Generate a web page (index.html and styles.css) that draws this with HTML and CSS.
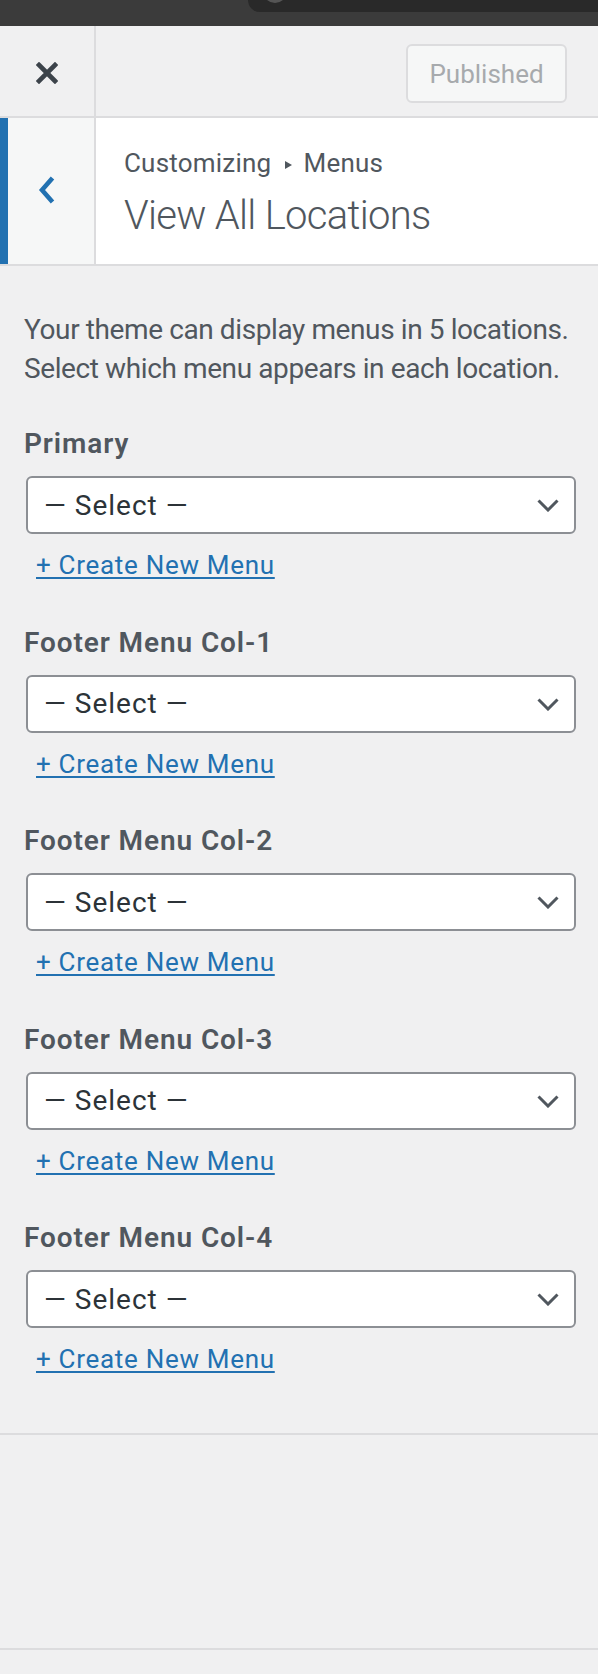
FILE: index.html
```html
<!DOCTYPE html>
<html lang="en">
<head>
<meta charset="utf-8">
<title>Customizing Menus</title>
<link rel="stylesheet" href="styles.css">
</head>
<body>
<div class="topbar"><div class="topbar-gap"></div><div class="topbar-tab"><div class="tab-dot"></div></div></div>
<header class="header">
  <button class="close" aria-label="Close">
    <svg width="22" height="22" viewBox="0 0 22 22" aria-hidden="true"><path d="M3 3 L19 19 M19 3 L3 19" stroke="#3c434a" stroke-width="4.6" stroke-linecap="square" fill="none"/></svg>
  </button>
  <div class="actions"><button class="publish" disabled>Published</button></div>
</header>
<div class="section-title">
  <div class="back" aria-label="Back">
    <svg width="18" height="30" viewBox="0 0 18 30" aria-hidden="true"><path d="M14.5 3 L4 15 L14.5 27" stroke="#2271b1" stroke-width="4.6" fill="none"/></svg>
  </div>
  <div class="title-text">
    <div class="crumb">Customizing <svg class="sep" width="7" height="8" viewBox="0 0 7 8" aria-hidden="true"><path d="M0 0 L7 4 L0 8 Z" fill="#50575e"/></svg> Menus</div>
    <h3 class="title">View All Locations</h3>
  </div>
</div>
<main class="content">
  <p class="desc">Your theme can display menus in 5 locations.<br>Select which menu appears in each location.</p>
  <ul class="controls">
    <li class="control">
      <label class="label">Primary</label>
      <div class="select-wrap"><select class="select"><option>— Select —</option></select><svg class="chev" width="22" height="13" viewBox="0 0 22 13" aria-hidden="true"><path d="M1.5 1.5 L11 11 L20.5 1.5" stroke="#50575e" stroke-width="3" fill="none"/></svg></div>
      <a class="create" href="#">+ Create New Menu</a>
    </li>
    <li class="control">
      <label class="label">Footer Menu Col-1</label>
      <div class="select-wrap"><select class="select"><option>— Select —</option></select><svg class="chev" width="22" height="13" viewBox="0 0 22 13" aria-hidden="true"><path d="M1.5 1.5 L11 11 L20.5 1.5" stroke="#50575e" stroke-width="3" fill="none"/></svg></div>
      <a class="create" href="#">+ Create New Menu</a>
    </li>
    <li class="control">
      <label class="label">Footer Menu Col-2</label>
      <div class="select-wrap"><select class="select"><option>— Select —</option></select><svg class="chev" width="22" height="13" viewBox="0 0 22 13" aria-hidden="true"><path d="M1.5 1.5 L11 11 L20.5 1.5" stroke="#50575e" stroke-width="3" fill="none"/></svg></div>
      <a class="create" href="#">+ Create New Menu</a>
    </li>
    <li class="control">
      <label class="label">Footer Menu Col-3</label>
      <div class="select-wrap"><select class="select"><option>— Select —</option></select><svg class="chev" width="22" height="13" viewBox="0 0 22 13" aria-hidden="true"><path d="M1.5 1.5 L11 11 L20.5 1.5" stroke="#50575e" stroke-width="3" fill="none"/></svg></div>
      <a class="create" href="#">+ Create New Menu</a>
    </li>
    <li class="control">
      <label class="label">Footer Menu Col-4</label>
      <div class="select-wrap"><select class="select"><option>— Select —</option></select><svg class="chev" width="22" height="13" viewBox="0 0 22 13" aria-hidden="true"><path d="M1.5 1.5 L11 11 L20.5 1.5" stroke="#50575e" stroke-width="3" fill="none"/></svg></div>
      <a class="create" href="#">+ Create New Menu</a>
    </li>
  </ul>
</main>
<div class="rule"></div>
<div class="spacer"></div>
<div class="rule"></div>
</body>
</html>
```
FILE: styles.css
```css
html, body {
  margin: 0;
  padding: 0;
  background: #f0f0f1;
}
body {
  width: 598px;
  font-family: Roboto, "Noto Sans", sans-serif;
  color: #50575e;
}
.topbar {
  display: flex;
  height: 26px;
  background: #3b3b3b;
}
.topbar-gap {
  width: 248px;
}
.topbar-tab {
  flex: 1;
  height: 12px;
  background: #292929;
  border-bottom-left-radius: 14px;
  overflow: hidden;
}
.tab-dot {
  width: 24px;
  height: 24px;
  margin: -21px 0 0 15px;
  border-radius: 50%;
  background: #555;
}
.header {
  display: flex;
  height: 92px;
  box-sizing: border-box;
  border-bottom: 2px solid #dcdcde;
}
.close {
  width: 96px;
  box-sizing: border-box;
  border: 0;
  border-right: 2px solid #dcdcde;
  background: transparent;
  padding: 3px 0 0;
  display: flex;
  align-items: center;
  justify-content: center;
}
.actions {
  flex: 1;
  display: flex;
  justify-content: flex-end;
  align-items: flex-start;
  padding: 18px 31px 0 0;
}
.publish {
  width: 161px;
  height: 59px;
  box-sizing: border-box;
  border: 2px solid #dcdcde;
  border-radius: 6px;
  background: #f6f7f7;
  color: #a7aaad;
  font-family: Roboto, "Noto Sans", sans-serif;
  font-size: 26px;
  padding: 0;
}
.section-title {
  display: flex;
  height: 148px;
  box-sizing: border-box;
  border-bottom: 2px solid #dcdcde;
  background: #fff;
}
.back {
  width: 96px;
  box-sizing: border-box;
  border-left: 8px solid #2271b1;
  border-right: 2px solid #dcdcde;
  background: #f6f7f7;
  display: flex;
  align-items: center;
  padding: 0 0 2px 30px;
}
.title-text {
  flex: 1;
  padding: 30px 0 0 28px;
}
.crumb {
  font-size: 26px;
  line-height: 30px;
  letter-spacing: 0.2px;
  color: #50575e;
}
.sep {
  margin: 0 5px 3px 7px;
}
.title {
  margin: 14px 0 0;
  font-size: 40px;
  font-weight: 300;
  line-height: 48px;
  letter-spacing: -0.7px;
  color: #50575e;
}
.content {
  padding: 44px 10px 57px 24px;
}
.desc {
  margin: 0;
  font-size: 28px;
  line-height: 39px;
  letter-spacing: -0.4px;
  color: #50575e;
  white-space: nowrap;
}
.controls {
  list-style: none;
  margin: 36px 0 0;
  padding: 0;
}
.control {
  display: flex;
  flex-direction: column;
  align-items: flex-start;
}
.control + .control {
  margin-top: 40.5px;
}
.label {
  font-size: 28px;
  font-weight: 600;
  line-height: 39px;
  letter-spacing: 0.9px;
  color: #50575e;
}
.select-wrap {
  position: relative;
  margin: 13px 0 0 2px;
  width: 550px;
  height: 58px;
}
.select {
  width: 100%;
  height: 100%;
  box-sizing: border-box;
  -webkit-appearance: none;
  appearance: none;
  border: 2px solid #8c8f94;
  border-radius: 6px;
  background: #fff;
  font-family: Roboto, "Noto Sans", sans-serif;
  font-size: 28px;
  letter-spacing: 1px;
  color: #2c3338;
  padding: 0 60px 0 16px;
  margin: 0;
}
.chev {
  position: absolute;
  right: 17px;
  top: 23px;
  pointer-events: none;
}
.create {
  margin: 14px 0 0 12px;
  font-size: 26px;
  line-height: 34px;
  letter-spacing: 0.7px;
  color: #2271b1;
  text-decoration: underline;
  text-decoration-thickness: 2px;
  text-underline-offset: 3px;
}
.rule {
  height: 2px;
  background: #dcdcde;
}
.spacer {
  height: 213px;
}
```
